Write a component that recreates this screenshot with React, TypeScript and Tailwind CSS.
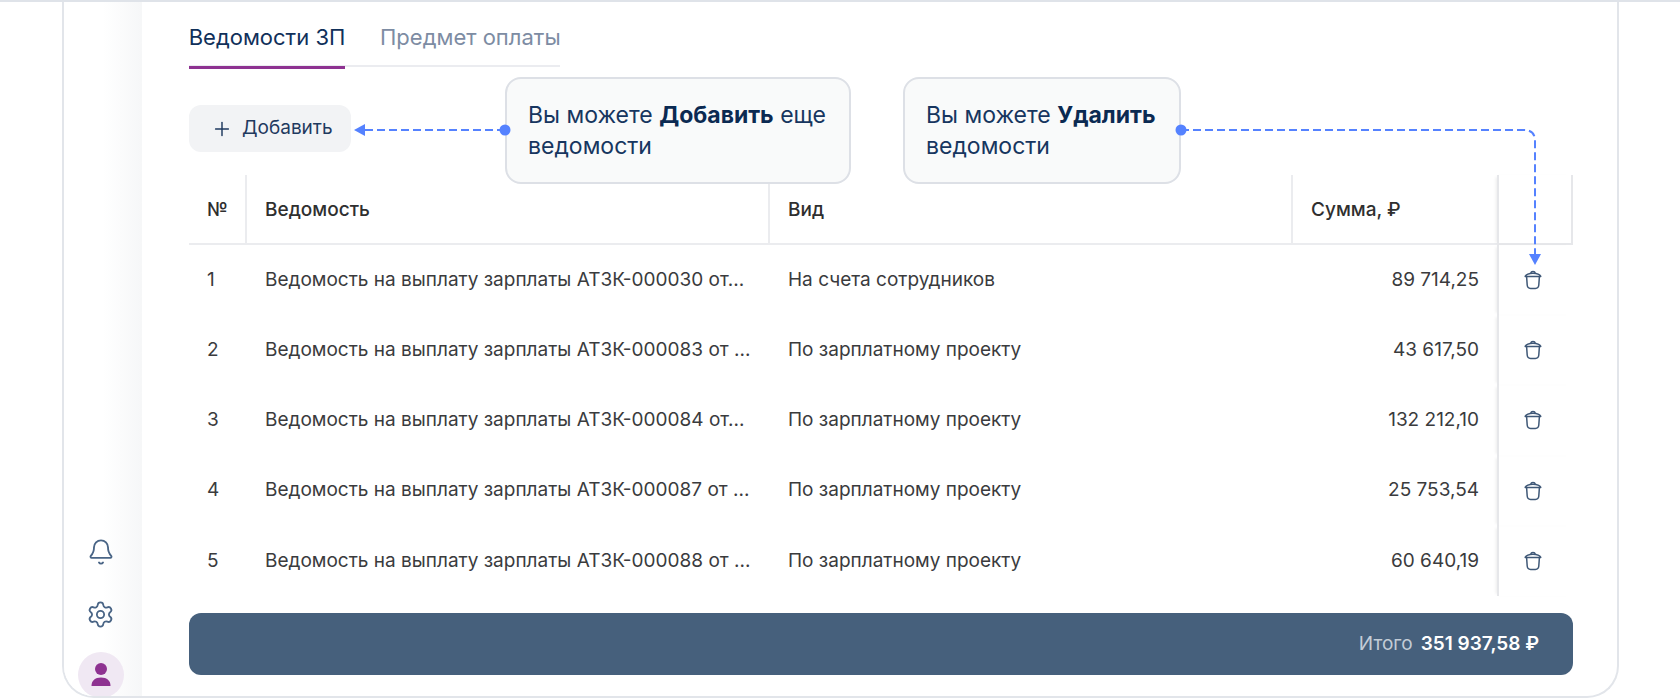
import React from "react";
import { Bell, Settings, Plus } from "lucide-react";

const rows = [
  ["1", "Ведомость на выплату зарплаты АТЗК-000030 от...", "На счета сотрудников", "89 714,25"],
  ["2", "Ведомость на выплату зарплаты АТЗК-000083 от ...", "По зарплатному проекту", "43 617,50"],
  ["3", "Ведомость на выплату зарплаты АТЗК-000084 от...", "По зарплатному проекту", "132 212,10"],
  ["4", "Ведомость на выплату зарплаты АТЗК-000087 от ...", "По зарплатному проекту", "25 753,54"],
  ["5", "Ведомость на выплату зарплаты АТЗК-000088 от ...", "По зарплатному проекту", "60 640,19"],
];

function Trash() {
  return (
    <svg width="18" height="20" viewBox="0 0 18 20" fill="none" stroke="#3f5877" strokeWidth="1.5" strokeLinecap="round" strokeLinejoin="round">
      <path d="M1.2 6.4 C2.6 3.6 6 3.2 9 3.2 C12 3.2 15.4 3.6 16.8 6.4 Z" />
      <path d="M6.8 3.2 C7 2 8 1.6 9 1.6 C10 1.6 11 2 11.2 3.2" />
      <path d="M2.6 6.6 L3.2 15 C3.4 17.4 4.8 18.4 6.6 18.4 H11.4 C13.2 18.4 14.6 17.4 14.8 15 L15.4 6.6" />
    </svg>
  );
}

function Tip({ className, children }: { className: string; children: React.ReactNode }) {
  return (
    <div className={"absolute top-[77px] h-[107px] rounded-[16px] border-2 border-[#dde0e6] bg-[#f9fafa] pl-[21px] pt-[21px] text-[23px] leading-[31px] text-[#17365f] " + className}>
      {children}
    </div>
  );
}

const th = "flex items-center px-[18px] pt-[2px] text-[19px] font-medium text-[#2f2f2f] border-b-2 border-[#ebecef]";
const td = "flex items-center px-[18px] text-[19px] text-[#3a3b3d] whitespace-nowrap overflow-hidden";

export default function App() {
  return (
    <div className="relative h-[698px] w-full overflow-hidden bg-white font-['Inter',sans-serif]">
      <div className="h-[2px] bg-[#dfe3e9]" />
      <div className="ml-[62px] flex h-[696px] w-[1557px] overflow-hidden rounded-b-[32px] border-x-2 border-b-2 border-[#e2e5ea]">
        <aside className="flex w-[78px] shrink-0 flex-col items-center justify-end bg-gradient-to-r from-white via-white to-[#f6f7f8] pr-[5px]">
          <Bell size={28} strokeWidth={1.6} className="mb-[34px] text-[#4a6586]" />
          <Settings size={29} strokeWidth={1.5} className="mb-[23px] text-[#4a6586]" />
          <div className="mb-[-2px] flex h-[46px] w-[46px] shrink-0 items-center justify-center rounded-full bg-[#f0e8f3]">
            <svg width="20" height="24" viewBox="0 0 20 24" fill="#8e3291">
              <circle cx="10" cy="6" r="6" />
              <path d="M0.5 23 C0.5 17.5 4 14.5 10 14.5 C16 14.5 19.5 17.5 19.5 23 Z" />
            </svg>
          </div>
        </aside>
        <main className="min-w-0 flex-1 pl-[47px] pr-[44px]">
          <div className="flex h-[65px] w-[371px] gap-[35px] border-b-2 border-[#ebecf0]">
            <div className="relative flex h-[65px] w-[156px] shrink-0 items-center justify-center whitespace-nowrap pt-[6px] text-[22px] text-[#10305a] after:absolute after:bottom-[-2px] after:left-0 after:h-[3px] after:w-full after:bg-[#8e3291]">Ведомости ЗП</div>
            <div className="flex h-[65px] items-center whitespace-nowrap pt-[6px] text-[22px] text-[#7d8ca3]">Предмет оплаты</div>
          </div>
          <button className="mt-[38px] flex h-[47px] w-[162px] items-center gap-[9px] rounded-[12px] bg-[#f2f3f5] pl-[22px] text-[19px] text-[#1f3a5f]">
            <Plus size={22} strokeWidth={1.6} />
            Добавить
          </button>
          <div className="mt-[23px] grid grid-cols-[58px_523px_523px_204px_76px]">
            <div className={th + " h-[70px] border-r-2"}>№</div>
            <div className={th + " h-[70px] border-r-2"}>Ведомость</div>
            <div className={th + " h-[70px] border-r-2"}>Вид</div>
            <div className={th + " h-[70px]"}>Сумма, ₽</div>
            <div className="h-[70px] border-x-2 border-b-2 border-[#e6e7ea] shadow-[-3px_0_3px_-2px_rgba(0,0,0,0.08)]" />
            {rows.map((r) => (
              <React.Fragment key={r[0]}>
                <div className={td + " h-[70.2px]"}>{r[0]}</div>
                <div className={td + " h-[70.2px]"}>{r[1]}</div>
                <div className={td + " h-[70.2px]"}>{r[2]}</div>
                <div className={td + " h-[70.2px] justify-end"}>{r[3]}</div>
                <div className="flex h-[70.2px] items-center justify-center border-l-2 border-[#e6e7ea] pr-[6px] shadow-[-3px_0_3px_-2px_rgba(0,0,0,0.08)]">
                  <Trash />
                </div>
              </React.Fragment>
            ))}
          </div>
          <div className="mt-[17px] flex h-[62px] w-[1384px] items-center justify-end rounded-[12px] bg-[#46607c] pr-[34px] text-[19px] text-white">
            <span className="mr-[8px] text-[#c3ccd6]">Итого</span>
            <span className="font-semibold">351 937,58 ₽</span>
          </div>
        </main>
      </div>

      <Tip className="left-[505px] w-[346px]">
        Вы можете <b className="font-bold text-[#0b2a52]">Добавить</b> еще<br />ведомости
      </Tip>
      <Tip className="left-[903px] w-[278px]">
        Вы можете <b className="font-bold text-[#0b2a52]">Удалить</b><br />ведомости
      </Tip>

      <svg className="pointer-events-none absolute left-0 top-0" width="1680" height="698" fill="none">
        <path d="M505 130 H364" stroke="#5582ff" strokeWidth="2" strokeDasharray="8 4" />
        <path d="M354 130 L365 124 V136 Z" fill="#5582ff" />
        <circle cx="505" cy="130" r="5.5" fill="#5582ff" />
        <path d="M1181 130 H1524 Q1535 130 1535 141 V254" stroke="#5582ff" strokeWidth="2" strokeDasharray="8 4" />
        <path d="M1535 265 L1529 254 H1541 Z" fill="#5582ff" />
        <circle cx="1181" cy="130" r="5.5" fill="#5582ff" />
      </svg>
    </div>
  );
}
